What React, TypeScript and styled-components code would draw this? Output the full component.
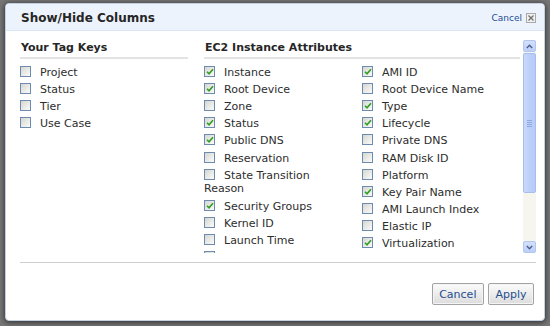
import React from "react";
import styled, { createGlobalStyle } from "styled-components";

const GlobalStyle = createGlobalStyle`
  html, body { margin: 0; padding: 0; }
  body {
    background: #767676;
    font-family: "DejaVu Sans", Verdana, sans-serif;
    color: #2a2a2a;
    width: 550px;
    height: 326px;
    overflow: hidden;
  }
`;

const Page = styled.div`
  box-sizing: border-box;
  height: 326px;
  padding: 3px 0 0 5px;
`;

const Dialog = styled.div`
  box-sizing: border-box;
  width: 540px;
  height: 318px;
  background: #fff;
  border: 1px solid #c4d0e0;
  border-radius: 4px;
  box-shadow: 0 1px 5px 1px rgba(0, 0, 0, 0.5);
  display: flex;
  flex-direction: column;
  overflow: hidden;
`;

const Header = styled.div`
  box-sizing: border-box;
  height: 27px;
  display: flex;
  align-items: center;
  padding: 0 8px 0 15px;
  background: #edf3fc;
  border-bottom: 1px solid #dde6f3;
`;

const Title = styled.div`
  font-size: 12px;
  font-weight: bold;
  color: #262626;
  padding-top: 2px;
`;

const HeaderActions = styled.div`
  margin-left: auto;
  display: flex;
  align-items: center;
  gap: 4px;
  padding-top: 1px;
`;

const HeaderLink = styled.span`
  font-size: 9px;
  color: #1f4e96;
`;

const CloseBox = styled.span`
  box-sizing: border-box;
  width: 10px;
  height: 10px;
  border: 1px solid #a9a9a9;
  background: #f1f1f1;
  display: flex;
  align-items: center;
  justify-content: center;
`;

const Body = styled.div`
  flex: 1;
  display: flex;
  flex-direction: column;
  padding: 9px 8px 0 14px;
`;

const ScrollArea = styled.div`
  height: 213px;
  display: flex;
  gap: 3px;
`;

const ScrollContent = styled.div`
  flex: 1;
  overflow: hidden;
  display: flex;
  gap: 16px;
`;

const Section = styled.div<{ $width?: number }>`
  ${(p) => (p.$width ? `width: ${p.$width}px;` : "flex: 1;")}
`;

const SectionHeading = styled.div`
  font-size: 11px;
  font-weight: bold;
  line-height: 14px;
  padding: 1px 0 2px 1px;
  border-bottom: 2px solid #e3e3e3;
  color: #262626;
`;

const Columns = styled.div`
  display: grid;
  grid-template-columns: 132px 1fr;
  column-gap: 26px;
`;

const List = styled.div`
  padding-top: 3px;
`;

const Item = styled.div`
  font-size: 11px;
  line-height: 13.6px;
  padding-top: 3.6px;
  color: #2d2d2d;
`;

const Box = styled.span`
  box-sizing: border-box;
  display: inline-block;
  width: 11px;
  height: 11px;
  margin-right: 9px;
  vertical-align: -1px;
  border: 1px solid #6d8bb0;
  background: linear-gradient(135deg, #d6d6d0 0%, #eaeae7 55%, #fbfbfb 100%);
  position: relative;
`;

const Check = styled.svg`
  position: absolute;
  left: 1px;
  top: 1px;
`;

const Scrollbar = styled.div`
  width: 13px;
  display: flex;
  flex-direction: column;
  background: #f6f6ef;
`;

const ArrowButton = styled.div`
  box-sizing: border-box;
  height: 12px;
  background: linear-gradient(#d3e0fc, #bccffa);
  border: 1px solid #b3c6ef;
  border-radius: 2px;
  display: flex;
  align-items: center;
  justify-content: center;
`;

const Thumb = styled.div`
  box-sizing: border-box;
  height: 140px;
  margin-top: 1px;
  background: linear-gradient(90deg, #c9d8fb, #bccffa 60%, #b6cbf8);
  border: 1px solid #a6bdee;
  border-radius: 2px;
  display: flex;
  flex-direction: column;
  align-items: center;
  justify-content: center;
  gap: 1px;
`;

const Grip = styled.span`
  width: 5px;
  height: 1px;
  background: #8ea8e0;
`;

const Track = styled.div`
  flex: 1;
`;

const Divider = styled.div`
  margin-top: 9px;
  border-top: 1px solid #cfcfcf;
`;

const Actions = styled.div`
  display: flex;
  justify-content: flex-end;
  gap: 4px;
  padding: 20px 2px 0 0;
`;

const Button = styled.button`
  box-sizing: border-box;
  height: 22px;
  padding: 0 6.5px;
  font-family: "DejaVu Sans", Verdana, sans-serif;
  font-size: 11px;
  color: #1f4e8e;
  background: linear-gradient(#fbfbfb, #e9e9e9 60%, #dcdcdc);
  border: 1px solid #a3a3a3;
  border-radius: 2px;
  box-shadow: inset 0 0 0 1px #f4f4f4;
`;

type Opt = { label: string; checked: boolean };

const tagKeys: Opt[] = [
  { label: "Project", checked: false },
  { label: "Status", checked: false },
  { label: "Tier", checked: false },
  { label: "Use Case", checked: false },
];

const colA: Opt[] = [
  { label: "Instance", checked: true },
  { label: "Root Device", checked: true },
  { label: "Zone", checked: false },
  { label: "Status", checked: true },
  { label: "Public DNS", checked: true },
  { label: "Reservation", checked: false },
  { label: "State Transition Reason", checked: false },
  { label: "Security Groups", checked: true },
  { label: "Kernel ID", checked: false },
  { label: "Launch Time", checked: false },
  { label: "Monitoring", checked: false },
];

const colB: Opt[] = [
  { label: "AMI ID", checked: true },
  { label: "Root Device Name", checked: false },
  { label: "Type", checked: true },
  { label: "Lifecycle", checked: true },
  { label: "Private DNS", checked: false },
  { label: "RAM Disk ID", checked: false },
  { label: "Platform", checked: false },
  { label: "Key Pair Name", checked: true },
  { label: "AMI Launch Index", checked: false },
  { label: "Elastic IP", checked: false },
  { label: "Virtualization", checked: true },
];

function CheckItem({ label, checked }: Opt) {
  return (
    <Item>
      <Box>
        {checked && (
          <Check width="8" height="8" viewBox="0 0 8 8">
            <path d="M1 3.8 L3 5.8 L7 1.2" fill="none" stroke="#2f9e22" strokeWidth="1.6" />
          </Check>
        )}
      </Box>
      {label}
    </Item>
  );
}

function OptionList({ items }: { items: Opt[] }) {
  return (
    <List>
      {items.map((o) => (
        <CheckItem key={o.label} {...o} />
      ))}
    </List>
  );
}

export default function App() {
  return (
    <>
      <GlobalStyle />
      <Page>
        <Dialog>
          <Header>
            <Title>Show/Hide Columns</Title>
            <HeaderActions>
              <HeaderLink>Cancel</HeaderLink>
              <CloseBox>
                <svg width="6" height="6" viewBox="0 0 6 6">
                  <path d="M0.5 0.5 L5.5 5.5 M5.5 0.5 L0.5 5.5" stroke="#707070" strokeWidth="1.3" />
                </svg>
              </CloseBox>
            </HeaderActions>
          </Header>
          <Body>
            <ScrollArea>
              <ScrollContent>
                <Section $width={168}>
                  <SectionHeading>Your Tag Keys</SectionHeading>
                  <OptionList items={tagKeys} />
                </Section>
                <Section>
                  <SectionHeading>EC2 Instance Attributes</SectionHeading>
                  <Columns>
                    <OptionList items={colA} />
                    <OptionList items={colB} />
                  </Columns>
                </Section>
              </ScrollContent>
              <Scrollbar>
                <ArrowButton>
                  <svg width="7" height="5" viewBox="0 0 7 5">
                    <path d="M0.8 4 L3.5 1.3 L6.2 4" fill="none" stroke="#4d6087" strokeWidth="1.5" />
                  </svg>
                </ArrowButton>
                <Thumb>
                  <Grip />
                  <Grip />
                  <Grip />
                  <Grip />
                </Thumb>
                <Track />
                <ArrowButton>
                  <svg width="7" height="5" viewBox="0 0 7 5">
                    <path d="M0.8 1 L3.5 3.7 L6.2 1" fill="none" stroke="#4d6087" strokeWidth="1.5" />
                  </svg>
                </ArrowButton>
              </Scrollbar>
            </ScrollArea>
            <Divider />
            <Actions>
              <Button>Cancel</Button>
              <Button>Apply</Button>
            </Actions>
          </Body>
        </Dialog>
      </Page>
    </>
  );
}
